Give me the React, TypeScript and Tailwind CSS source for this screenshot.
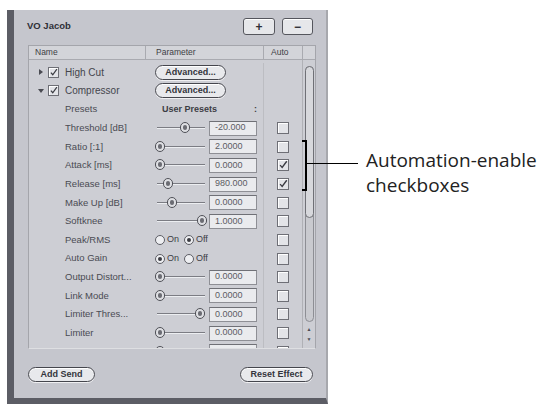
import React from "react";

type Row =
  | { kind: "group"; label: string; open: boolean }
  | { kind: "presets" }
  | { kind: "slider"; label: string; pos: number; value: string; auto?: boolean }
  | { kind: "radio"; label: string; on: boolean };

const rows: Row[] = [
  { kind: "group", label: "High Cut", open: false },
  { kind: "group", label: "Compressor", open: true },
  { kind: "presets" },
  { kind: "slider", label: "Threshold [dB]", pos: 30, value: "-20.000" },
  { kind: "slider", label: "Ratio [:1]", pos: 5, value: "2.0000" },
  { kind: "slider", label: "Attack [ms]", pos: 5, value: "0.0000", auto: true },
  { kind: "slider", label: "Release [ms]", pos: 13, value: "980.000", auto: true },
  { kind: "slider", label: "Make Up [dB]", pos: 17, value: "0.0000" },
  { kind: "slider", label: "Softknee", pos: 47, value: "1.0000" },
  { kind: "radio", label: "Peak/RMS", on: false },
  { kind: "radio", label: "Auto Gain", on: true },
  { kind: "slider", label: "Output Distort...", pos: 5, value: "0.0000" },
  { kind: "slider", label: "Link Mode", pos: 5, value: "0.0000" },
  { kind: "slider", label: "Limiter Thres...", pos: 45, value: "0.0000" },
  { kind: "slider", label: "Limiter", pos: 5, value: "0.0000" },
  { kind: "slider", label: "", pos: 5, value: "0.0000" },
];

function Check({ checked, size = 12 }: { checked: boolean; size?: number }) {
  return (
    <div
      className="relative border border-[#6e6f76] bg-[#e3e4e8] shadow-[inset_1px_1px_0_#ffffff]"
      style={{ width: size, height: size }}
    >
      {checked && (
        <svg viewBox="0 0 12 12" className="absolute left-0 top-0 w-full h-full">
          <path d="M2.5 6.2 L5 9 L10.5 1.5" fill="none" stroke="#3a3b42" strokeWidth="1.6" />
        </svg>
      )}
    </div>
  );
}

function Radio({ on }: { on: boolean }) {
  return (
    <div className="w-[10px] h-[10px] rounded-full border border-[#5d5e65] bg-[#eeeff2] flex items-center justify-center">
      {on && <div className="w-[4px] h-[4px] rounded-full bg-[#3a3b42]" />}
    </div>
  );
}

function Slider({ pos }: { pos: number }) {
  return (
    <div className="relative w-[50px] h-[18px] shrink-0">
      <div className="absolute left-[2px] right-0 top-[8px] h-[1px] bg-[#7b7c83]" />
      <div className="absolute left-[2px] right-0 top-[9px] h-[1px] bg-[#eceef1]" />
      <div
        className="absolute top-[3px] w-[10px] h-[11px] rounded-full border border-[#4f5057] bg-[#dedfe3] flex items-center justify-center"
        style={{ left: pos - 5 }}
      >
        <div className="w-[4px] h-[5px] rounded-[2px] bg-[#6b6c73]" />
      </div>
    </div>
  );
}

function ValueBox({ value }: { value: string }) {
  return (
    <div className="w-[48px] h-[15px] bg-[#eaebee] border border-[#8e8f95] border-t-[#6f7076] flex items-center pl-[5px] text-[9px] text-[#5b5c63]">
      {value}
    </div>
  );
}

function Pill({ children, w }: { children: React.ReactNode; w: number }) {
  return (
    <div
      className="h-[15px] rounded-full border border-[#45464d] bg-[#e8e9ec] shadow-[inset_0_1px_0_#ffffff,0_1px_0_#f0f0f2] flex items-center justify-center text-[9px] font-bold text-[#34353c]"
      style={{ width: w }}
    >
      {children}
    </div>
  );
}

function TableRow({ row }: { row: Row }) {
  const showAuto = row.kind === "slider" || row.kind === "radio";
  const checked = row.kind === "slider" && !!row.auto;
  return (
    <div className="flex h-[18.64px] items-center shrink-0">
      <div className="w-[116px] shrink-0 flex items-center h-full">
        {row.kind === "group" ? (
          <>
            <div className="w-[9px]" />
            <svg width="6" height="6" viewBox="0 0 6 6" className="shrink-0">
              {row.open ? (
                <path d="M0 1 L6 1 L3 5 Z" fill="#4a4b52" />
              ) : (
                <path d="M1 0 L5 3 L1 6 Z" fill="#4a4b52" />
              )}
            </svg>
            <div className="w-[4px]" />
            <Check checked size={11} />
            <span className="ml-[6px] text-[10px] text-[#44454c]">{row.label}</span>
          </>
        ) : (
          <span className="ml-[36px] text-[9.5px] text-[#4a4b53] whitespace-nowrap">
            {row.kind === "presets" ? "Presets" : row.label}
          </span>
        )}
      </div>
      <div className="w-[118px] shrink-0 flex items-center h-full">
        {row.kind === "group" && (
          <div className="ml-[10px]">
            <Pill w={71}>Advanced...</Pill>
          </div>
        )}
        {row.kind === "presets" && (
          <div className="flex items-center w-full">
            <span className="ml-[17px] text-[9px] font-bold text-[#3c3d44]">User Presets</span>
            <span className="ml-auto mr-[6px] text-[9px] font-bold text-[#3c3d44] leading-none">:</span>
          </div>
        )}
        {row.kind === "slider" && (
          <div className="ml-[10px] flex items-center gap-[4px]">
            <Slider pos={row.pos} />
            <ValueBox value={row.value} />
          </div>
        )}
        {row.kind === "radio" && (
          <div className="ml-[10px] flex items-center text-[9px] text-[#3c3d44]">
            <Radio on={row.on} />
            <span className="ml-[2px]">On</span>
            <div className="ml-[5px]">
              <Radio on={!row.on} />
            </div>
            <span className="ml-[2px]">Off</span>
          </div>
        )}
      </div>
      <div className="w-[39px] shrink-0 h-full flex items-center border-l border-[#bcbdc2]">
        {showAuto && (
          <div className="ml-[13px]">
            <Check checked={checked} />
          </div>
        )}
      </div>
    </div>
  );
}

export default function App() {
  return (
    <div
      className="relative w-[540px] h-[404px] bg-white overflow-hidden"
      style={{ fontFamily: '"Liberation Sans", Arial, sans-serif' }}
    >
      <div className="ml-[7px] mt-[10px] w-[321px] h-[394px] border-l-[7px] border-b-[6px] border-r-[2px] border-[#5c5d65] border-r-[#a7a8ad] bg-[#c5c6cd] flex flex-col">
        {/* title row */}
        <div className="mt-[8px] h-[17px] flex items-center">
          <span className="ml-[13px] text-[9.5px] font-bold text-[#2f3037]">VO Jacob</span>
          <div className="ml-auto mr-[13px] flex gap-[7px]">
            <div className="w-[32px] h-[17px] rounded-[3px] border border-[#55565d] bg-[#e6e7ea] shadow-[inset_0_1px_0_#ffffff] flex items-center justify-center text-[12px] font-bold text-[#2e2f36] leading-none">
              +
            </div>
            <div className="w-[31px] h-[17px] rounded-[3px] border border-[#55565d] bg-[#e6e7ea] shadow-[inset_0_1px_0_#ffffff] flex items-center justify-center text-[12px] font-bold text-[#2e2f36] leading-none">
              −
            </div>
          </div>
        </div>

        {/* table */}
        <div className="mt-[10px] ml-[14px] w-[288px] h-[304px] border border-[#a4a5ab] border-b-[#dedfe2] bg-[#cdced4] flex flex-col overflow-hidden">
          <div className="h-[14px] shrink-0 flex items-center border-b border-[#a9aab0] bg-[#d3d4d9] text-[8.5px] text-[#3d3e45]">
            <div className="w-[116px] pl-[6px]">Name</div>
            <div className="w-[118px] pl-[10px] border-l border-[#a9aab0] h-full flex items-center">Parameter</div>
            <div className="w-[39px] pl-[7px] border-l border-[#a9aab0] h-full flex items-center">Auto</div>
            <div className="w-[13px] border-l border-[#a9aab0] h-full" />
          </div>
          <div className="flex flex-1 min-h-0">
            <div className="w-[273px] flex flex-col pt-[3px] overflow-hidden">
              {rows.map((r, i) => (
                <TableRow key={i} row={r} />
              ))}
            </div>
            <div className="w-[13px] border-l border-[#b0b1b6] flex flex-col items-center pt-[6px]">
              <div className="w-[9px] h-[256px] rounded-full border border-[#8d8e94] bg-[#c9cacf] flex flex-col">
                <div className="h-[152px] rounded-full border border-[#6f7076] bg-[#d7d8dc] -m-[1px]" />
              </div>
              <div className="mt-[5px] text-[5px] leading-none text-[#4b4c53]">▲</div>
              <div className="mt-[5px] text-[5px] leading-none text-[#4b4c53]">▼</div>
            </div>
          </div>
        </div>

        {/* bottom buttons */}
        <div className="mt-[18px] flex items-center">
          <div className="ml-[14px]">
            <Pill w={67}>Add Send</Pill>
          </div>
          <div className="ml-auto mr-[13px]">
            <Pill w={73}>Reset Effect</Pill>
          </div>
        </div>
      </div>

      {/* annotation */}
      <div className="absolute left-[302px] top-[140px] w-[5px] h-[51px] border-r-2 border-t-2 border-b-2 border-black" />
      <div className="absolute left-[307px] top-[163px] w-[51px] h-[1px] bg-black" />
      <div
        className="absolute left-[366px] top-[148px] text-[19px] leading-[25px] text-[#222]"
        style={{ fontFamily: '"Open Sans", "Noto Sans", sans-serif' }}
      >
        <div>Automation-enable</div>
        <div>checkboxes</div>
      </div>
    </div>
  );
}
